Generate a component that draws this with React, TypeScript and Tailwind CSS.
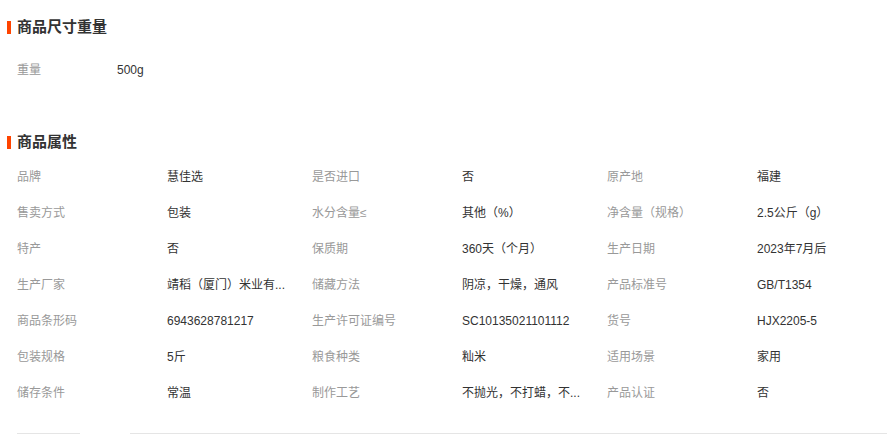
import React from "react";

const font = { fontFamily: '"Liberation Sans", "Noto Sans CJK SC", sans-serif' };

const attrs: [string, string][] = [
  ["品牌", "慧佳选"],
  ["是否进口", "否"],
  ["原产地", "福建"],
  ["售卖方式", "包装"],
  ["水分含量≤", "其他（%）"],
  ["净含量（规格）", "2.5公斤（g）"],
  ["特产", "否"],
  ["保质期", "360天（个月）"],
  ["生产日期", "2023年7月后"],
  ["生产厂家", "靖稻（厦门）米业有..."],
  ["储藏方法", "阴凉，干燥，通风"],
  ["产品标准号", "GB/T1354"],
  ["商品条形码", "6943628781217"],
  ["生产许可证编号", "SC10135021101112"],
  ["货号", "HJX2205-5"],
  ["包装规格", "5斤"],
  ["粮食种类", "籼米"],
  ["适用场景", "家用"],
  ["储存条件", "常温"],
  ["制作工艺", "不抛光，不打蜡，不..."],
  ["产品认证", "否"],
];

function Title({ children }: { children: React.ReactNode }) {
  return (
    <div className="flex h-5 items-center">
      <span className="ml-[7px] h-[13px] w-1 bg-[#ff4400]" />
      <span className="ml-[6px] text-[15px] font-bold text-[#333]">{children}</span>
    </div>
  );
}

export default function App() {
  return (
    <div className="w-[887px] h-[435px] overflow-hidden bg-white" style={font}>
      <div className="pt-[17px]">
        <Title>商品尺寸重量</Title>
        <div className="mt-[15px] flex h-9 items-center pl-[17px] text-xs">
          <span className="w-[100px] text-[#999]">重量</span>
          <span className="text-[#333]">500g</span>
        </div>
      </div>

      <div className="mt-[44px]">
        <Title>商品属性</Title>
        <div className="mt-[7px] grid grid-cols-[150px_145px_150px_145px_150px_145px] pl-[17px] text-xs">
          {attrs.map(([k, v]) => (
            <React.Fragment key={k}>
              <div className="flex h-9 items-center text-[#999]">{k}</div>
              <div className="flex h-9 items-center whitespace-nowrap text-[#333]">{v}</div>
            </React.Fragment>
          ))}
        </div>
      </div>

      <div className="mt-[22px] flex">
        <div className="ml-[17px] w-[63px] border-t border-[#e5e5e5]" />
        <div className="ml-[50px] flex-1 border-t border-[#e5e5e5]" />
      </div>
    </div>
  );
}
